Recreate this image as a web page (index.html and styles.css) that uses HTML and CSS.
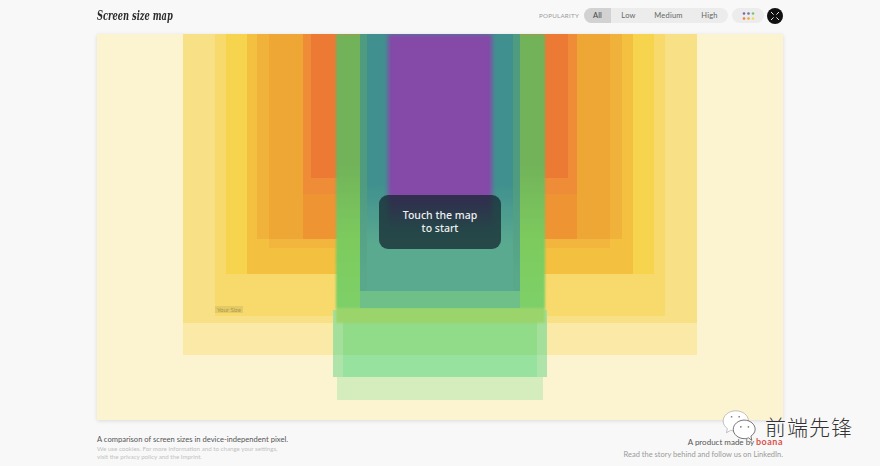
FILE: index.html
```html
<html>

<head>
	<meta charset="utf-8">
	<title>Screen size map</title>
	<link rel="stylesheet" href="styles.css">
</head>

<body>
	<header class="top-bar">
		<div class="logo">Screen size map</div>
		<div class="controls">
			<span class="pop-label">POPULARITY</span>
			<div class="pills">
				<button class="pill active">All</button>
				<button class="pill">Low</button>
				<button class="pill">Medium</button>
				<button class="pill">High</button>
			</div>
			<button class="dots-btn">
				<svg width="13" height="8" viewBox="0 0 13 8">
					<circle cx="2" cy="1.5" r="1.3" fill="#8a5aa8" />
					<circle cx="6.5" cy="1.5" r="1.3" fill="#6a7aa8" />
					<circle cx="11" cy="1.5" r="1.3" fill="#7cc46a" />
					<circle cx="2" cy="6.5" r="1.3" fill="#ee7f3a" />
					<circle cx="6.5" cy="6.5" r="1.3" fill="#f0a838" />
					<circle cx="11" cy="6.5" r="1.3" fill="#f6d860" />
				</svg>
			</button>
			<button class="round-btn">
				<svg width="10" height="10" viewBox="0 0 10 10" fill="none" stroke="#fff" stroke-width="0.9">
					<path d="M1 1 L3.6 3.6 M9 1 L6.4 3.6 M1 9 L3.6 6.4 M9 9 L6.4 6.4" />
				</svg>
			</button>
		</div>
	</header>

	<main class="map">
		<!-- rectangles go from the biggest screen to the smallest -->
		<div class="rect y1"></div>
		<div class="rect y2"></div>
		<div class="rect y3"></div>
		<div class="rect y4"></div>
		<div class="rect o1"></div>
		<div class="rect o2"></div>
		<div class="rect o3"></div>
		<div class="rect o4"></div>
		<div class="rect o5"></div>
		<div class="rect g1"></div>
		<div class="rect g2"></div>
		<div class="rect g3"></div>
		<div class="rect g4"></div>
		<div class="rect t1"></div>
		<div class="rect t2"></div>
		<div class="rect purple"></div>
		<div class="your-size">Your Size</div>
		<div class="touch-card">Touch the map<br>to start</div>
	</main>

	<footer class="bottom-bar">
		<div class="foot-left">
			<p class="foot-main">A comparison of screen sizes in device-independent pixel.</p>
			<p class="foot-small">We use cookies. For more information and to change your settings,<br>visit the privacy policy and the Imprint.</p>
		</div>
		<div class="foot-right">
			<p class="foot-made">A product made by <b class="boana">boana</b></p>
			<p class="foot-story">Read the story behind and follow us on LinkedIn.</p>
		</div>
	</footer>

	<div class="watermark">
		<svg class="wm-icon" width="36" height="32" viewBox="0 0 42 38">
			<path d="M16 1 C7 1 1 7 1 13 C1 17 3 20 6 22 L5 27 L10 24 C12 25 14 25 16 25 C24 25 31 20 31 13 C31 6 24 1 16 1 Z" fill="#fff" stroke="#8a8a8a" stroke-width="0.6" />
			<path d="M26 12 C19 12 13 17 13 23 C13 29 19 34 26 34 C28 34 29 34 31 33 L35 36 L34 31 C37 29 39 26 39 23 C39 17 33 12 26 12 Z" fill="#fff" stroke="#333" stroke-width="0.8" />
			<circle cx="11" cy="8" r="1" fill="#777" />
			<circle cx="20" cy="8" r="1" fill="#777" />
			<circle cx="22" cy="20" r="1" fill="#777" />
			<circle cx="31" cy="20" r="1" fill="#777" />
		</svg>
		<span class="wm-text">前端先锋</span>
	</div>
</body>

</html>
```

FILE: styles.css
```css
:root {
	--bg: #f8f8f8;
	--ink: #333333;
	--faint: #c2c2c2;
}

* {
	box-sizing: border-box;
}

html,
body {
	height: 100%;
}

body {
	margin: 0;
	background: var(--bg);
	color: var(--ink);
	font-family: "Lato", sans-serif;
	display: flex;
	flex-direction: column;
	overflow: hidden;
	position: relative;
}

p {
	margin: 0;
}

button {
	font: inherit;
	border: none;
	padding: 0;
	color: inherit;
}

.top-bar {
	height: 34px;
	padding: 0 97px;
	display: flex;
	justify-content: space-between;
	align-items: center;
}

.logo {
	font-family: "DejaVu Serif", serif;
	font-style: italic;
	font-weight: bold;
	font-size: 13px;
	color: #2c2c2c;
	padding-bottom: 3px;
	transform: scaleX(0.64);
	transform-origin: left center;
	white-space: nowrap;
}

.controls {
	display: flex;
	align-items: center;
	padding-bottom: 3px;
}

.pop-label {
	font-size: 6.2px;
	letter-spacing: 0.25px;
	color: #999999;
	margin-right: 5px;
}

.pills {
	display: flex;
	height: 15px;
	border-radius: 8px;
	background: #ececec;
	overflow: hidden;
}

.pill {
	background: none;
	font-size: 7.5px;
	letter-spacing: 0.2px;
	color: #666666;
}

.pill:nth-child(1) {
	width: 27px;
}

.pill:nth-child(2) {
	width: 35px;
}

.pill:nth-child(3) {
	width: 45px;
}

.pill:nth-child(4) {
	width: 37px;
}

.pill.active {
	background: #d2d2d2;
	color: #444444;
}

.dots-btn {
	width: 32px;
	height: 15px;
	margin-left: 4px;
	border-radius: 8px;
	background: #ececec;
	display: flex;
	align-items: center;
	justify-content: center;
}

.round-btn {
	width: 16px;
	height: 16px;
	margin-left: 3px;
	border-radius: 50%;
	background: #111111;
	display: flex;
	align-items: center;
	justify-content: center;
}

.map {
	position: relative;
	height: 386px;
	margin: 0 97px;
	background: #fcf3d0;
	box-shadow: 0 1px 4px rgba(0, 0, 0, 0.12);
	overflow: hidden;
}

/* map is a free canvas, every screen is pinned to the top centre */
.rect {
	position: absolute;
	top: 0;
	filter: blur(0.7px);
}

.y1 { left: 86px; width: 514px; height: 321px; background: #fbe9a8; }
.y2 { left: 86px; width: 514px; height: 289px; background: #f8e086; }
.y3 { left: 118px; width: 450px; height: 282px; background: #f8da6c; }
.y4 { left: 129px; width: 428px; height: 240px; background: #f6d44e; }

.o1 { left: 150px; width: 386px; height: 240px; background: #f4c040; }
.o2 { left: 160px; width: 365px; height: 205px; background: #f1b23c; }
.o3 { left: 172px; width: 341px; height: 214px; background: linear-gradient(#eea734 205px, #f2b63e 205px); }
.o4 { left: 206px; width: 274px; height: 205px; background: linear-gradient(#ee8c38 160px, #ef9433 160px); }
.o5 { left: 214px; width: 257px; height: 144px; background: #ec7a34; }

.g1 { left: 240px; width: 206px; height: 366px; background: linear-gradient(transparent 276px, #d5ecbc 276px); }
.g2 { left: 236px; width: 214px; height: 343px; background: linear-gradient(transparent 276px, #a4e09c 276px, #a4e09c 321px, #aee4aa 321px); }
.g3 { left: 246px; width: 194px; height: 343px; background: linear-gradient(transparent 276px, #90dc88 276px, #90dc88 321px, #98e2a0 321px); }
.g4 { left: 239px; width: 209px; height: 289px; background: linear-gradient(#72b35a 130px, #7dcb5e 206px, #7dd068 274px, #9cd46c 274px); filter: blur(1.2px); }

.t1 { left: 263px; width: 160px; height: 274px; background: linear-gradient(#4f9b80 150px, #5aa88c 240px, #5aa88c 257px, #6fc088 257px); }
.t2 { left: 270px; width: 146px; height: 257px; background: linear-gradient(#40908f 150px, #5aaa90 210px); }

.purple {
	left: 291px;
	width: 104px;
	height: 196px;
	background: linear-gradient(#8549a8 161px, rgba(133, 73, 168, 0) 196px);
	filter: blur(2px);
}

.your-size {
	position: absolute;
	left: 118px;
	top: 272px;
	padding: 0 2px;
	font-size: 6px;
	color: #a89a50;
	background: rgba(170, 150, 80, 0.25);
}

.touch-card {
	position: absolute;
	left: 282px;
	top: 161px;
	width: 122px;
	height: 54px;
	border-radius: 9px;
	background: rgba(20, 35, 45, 0.72);
	color: #f0f0f0;
	font-family: "Noto Sans", sans-serif;
	font-weight: 500;
	font-size: 10.5px;
	line-height: 13.5px;
	text-align: center;
	display: flex;
	align-items: center;
	justify-content: center;
}

.bottom-bar {
	padding: 15px 97px 0;
	display: flex;
	justify-content: space-between;
}

.foot-main {
	font-size: 7.6px;
	line-height: 9px;
	color: #555555;
}

.foot-small {
	font-size: 6.2px;
	line-height: 8px;
	color: var(--faint);
	margin-top: 1px;
}

.foot-right {
	text-align: right;
	padding-top: 2px;
}

.foot-made {
	font-size: 8px;
	line-height: 9px;
	color: #555555;
}

.boana {
	color: #dd524e;
	font-size: 9px;
	letter-spacing: 0.5px;
}

.foot-story {
	font-size: 7.5px;
	line-height: 9px;
	color: #9a9a9a;
	margin-top: 3px;
}

.watermark {
	position: absolute;
	left: 722px;
	top: 410px;
	display: flex;
	align-items: flex-start;
	gap: 7px;
}

.wm-text {
	font-family: "Noto Sans CJK SC", sans-serif;
	font-size: 21px;
	line-height: 18px;
	margin-top: 7px;
	font-weight: 300;
	letter-spacing: 1px;
	color: #333333;
	text-shadow: 0 0 2px #fff;
}
```
